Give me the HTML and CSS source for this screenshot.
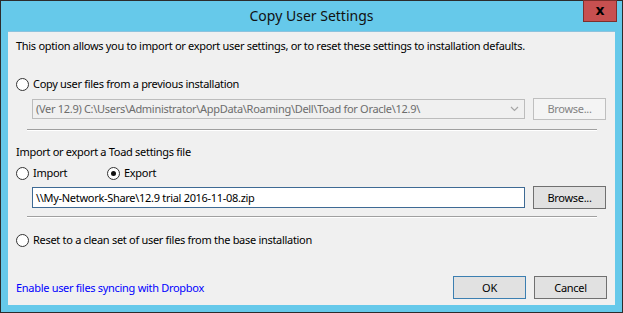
FILE: index.html
```html
<!DOCTYPE html>
<html lang="en">
<head>
  <meta charset="UTF-8">
  <title>Copy User Settings</title>
  <link rel="stylesheet" href="styles.css">
</head>
<body>
<div class="window">
  <div class="titlebar">
    <span class="title">Copy User Settings</span>
    <div class="close">x</div>
  </div>

  <div class="client">
    <div class="intro">This option allows you to import or export user settings, or to reset these settings to installation defaults.</div>

    <label class="radio-row first">
      <span class="radio"></span>
      <span>Copy user files from a previous installation</span>
    </label>
    <div class="field-row combo-row">
      <div class="combo">
        <span class="combo-text">(Ver 12.9) C:\Users\Administrator\AppData\Roaming\Dell\Toad for Oracle\12.9\</span>
        <svg class="chevron" width="9" height="6" viewBox="0 0 9 6"><path d="M1 1 L4.5 4.5 L8 1" fill="none" stroke="#a6a6a6" stroke-width="1.2"/></svg>
      </div>
      <div class="button disabled">Browse...</div>
    </div>

    <div class="separator sep-one"></div>

    <div class="group-label">Import or export a Toad settings file</div>
    <div class="radio-pair">
      <label class="radio-row import">
        <span class="radio"></span>
        <span>Import</span>
      </label>
      <label class="radio-row">
        <span class="radio checked"></span>
        <span>Export</span>
      </label>
    </div>
    <div class="field-row file-row">
      <div class="textbox">\\My-Network-Share\12.9 trial 2016-11-08.zip</div>
      <div class="button">Browse...</div>
    </div>

    <div class="separator sep-two"></div>

    <label class="radio-row reset">
      <span class="radio"></span>
      <span>Reset to a clean set of user files from the base installation</span>
    </label>

    <div class="footer">
      <a class="link">Enable user files syncing with Dropbox</a>
      <div class="buttons">
        <div class="button default">OK</div>
        <div class="button">Cancel</div>
      </div>
    </div>
  </div>
</div>
</body>
</html>
```

FILE: styles.css
```css
body {
  margin: 0;
  font-family: "Noto Sans", sans-serif;
  font-size: 11px;
  letter-spacing: -0.3px;
  color: #000;
}
.window {
  width: 621px;
  height: 311px;
  border: 1px solid #2c2c2c;
  background-color: #66c9ea;
  display: flex;
  flex-direction: column;
}
.titlebar {
  height: 30px;
  position: relative;
  display: flex;
  justify-content: center;
  align-items: center;
}
.title {
  font-size: 14px;
  letter-spacing: 0;
  color: #111;
  margin-top: -1px;
}
.close {
  position: absolute;
  top: -1px;
  right: 5px;
  width: 34px;
  height: 22px;
  background-color: #c75050;
  border: 1px solid #7d2f2c;
  display: flex;
  justify-content: center;
  align-items: center;
  font-family: "DejaVu Sans", sans-serif;
  font-weight: bold;
  font-size: 14px;
  letter-spacing: 0;
  line-height: 1;
  padding-bottom: 3px;
  box-sizing: border-box;
}
.client {
  margin: 0 7px 7px 7px;
  flex: 1;
  background-color: #f0f0f0;
  border-top: 1px solid #8cc3de;
  padding: 6px 9px 6px 8px;
  display: flex;
  flex-direction: column;
}
.intro {
  line-height: 16px;
  white-space: nowrap;
}
.radio-row {
  display: flex;
  align-items: center;
  gap: 4px;
  height: 16px;
  line-height: 16px;
}
.radio-row.first {
  margin-top: 22px;
}
.radio {
  width: 11px;
  height: 11px;
  border: 1px solid #333;
  border-radius: 50%;
  background-color: #fff;
  display: flex;
  justify-content: center;
  align-items: center;
}
.radio.checked::after {
  content: "";
  width: 5px;
  height: 5px;
  border-radius: 50%;
  background-color: #111;
}
.field-row {
  margin-left: 16px;
  display: flex;
  align-items: center;
  gap: 8px;
  height: 23px;
}
.combo-row {
  margin-top: 5px;
}
.combo {
  flex: 1;
  height: 20px;
  box-sizing: border-box;
  border: 1px solid #bcbcbc;
  display: flex;
  align-items: center;
  justify-content: space-between;
  padding: 0 5px 0 3px;
  color: #6d6d6d;
}
.combo-text {
  white-space: nowrap;
}
.button {
  width: 73px;
  height: 23px;
  box-sizing: border-box;
  border: 1px solid #707070;
  background-color: #e1e1e1;
  display: flex;
  justify-content: center;
  align-items: center;
}
.button.disabled {
  height: 22px;
  border-color: #bfbfbf;
  background-color: #f4f4f4;
  color: #838383;
}
.button.default {
  border-color: #3c7fb1;
}
.separator {
  height: 1px;
  background-color: #a0a0a0;
  border-bottom: 1px solid #fff;
  margin-left: 11px;
  margin-right: 9px;
}
.sep-one {
  margin-top: 9px;
}
.group-label {
  margin-top: 13px;
  line-height: 16px;
}
.radio-pair {
  display: flex;
  margin-top: 5px;
}
.radio-row.import {
  width: 91px;
}
.file-row {
  margin-top: 5px;
}
.textbox {
  flex: 1;
  height: 21px;
  box-sizing: border-box;
  border: 1px solid #3e6a94;
  background-color: #fff;
  padding: 0 3px;
  display: flex;
  align-items: center;
  white-space: nowrap;
}
.sep-two {
  margin-top: 7px;
}
.radio-row.reset {
  margin-top: 14px;
}
.footer {
  margin-top: auto;
  margin-right: -1px;
  display: flex;
  justify-content: space-between;
  align-items: center;
}
.link {
  color: #0000ff;
  cursor: pointer;
}
.buttons {
  display: flex;
  gap: 8px;
}
```
